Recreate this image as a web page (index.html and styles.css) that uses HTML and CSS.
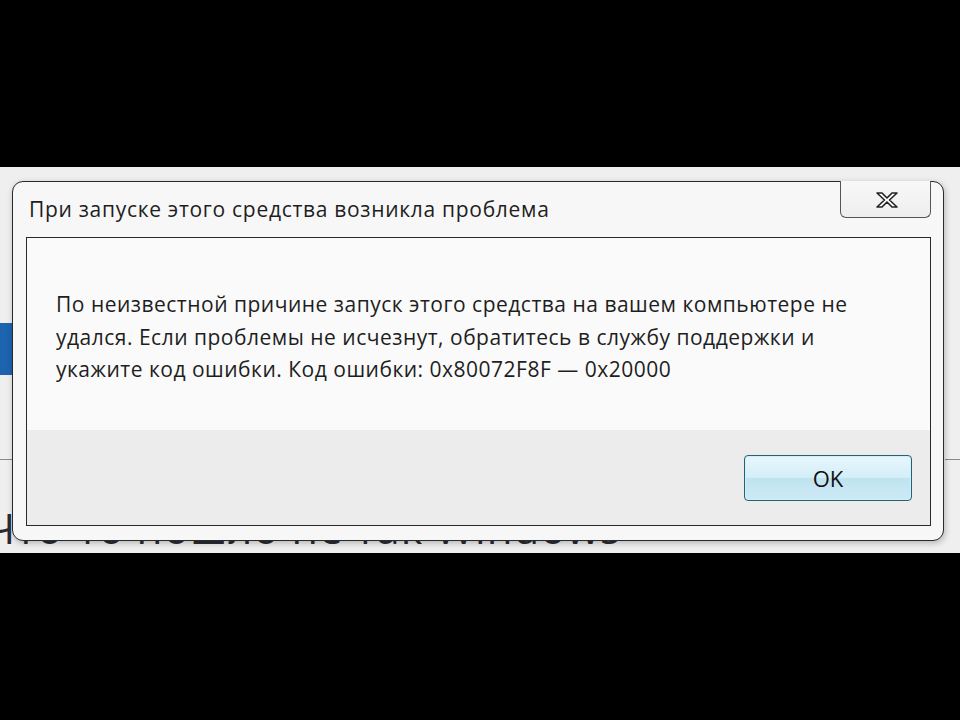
FILE: index.html
```html
<!DOCTYPE html>
<html lang="ru">
<head>
<meta charset="utf-8">
<link rel="stylesheet" href="styles.css">
</head>
<body>
<div class="top-black"></div>
<div class="screen">
  <div class="bg-blue"></div>
  <div class="bg-line bg-line-left"></div>
  <div class="bg-line bg-line-right"></div>
  <div class="bg-text">Что-то пошло не так Windows</div>
  <div class="dialog">
    <div class="titlebar">
      <div class="title">При запуске этого средства возникла проблема</div>
      <div class="close">
        <svg width="26" height="20" viewBox="0 0 26 20">
          <path d="M3 3 L8 3 L13 8 L18 3 L23 3 L15.5 10 L23 17 L18 17 L13 12 L8 17 L3 17 L10.5 10 Z" fill="#fff" stroke="#222" stroke-width="1.6" stroke-linejoin="round"/>
        </svg>
      </div>
    </div>
    <div class="client">
      <div class="content">
        <p class="message">По неизвестной причине запуск этого средства на вашем компьютере не<br>удался. Если проблемы не исчезнут, обратитесь в службу поддержки и<br>укажите код ошибки. Код ошибки: 0x80072F8F — 0x20000</p>
      </div>
      <div class="footer">
        <button class="ok">OK</button>
      </div>
    </div>
  </div>
</div>
<div class="bottom-black"></div>
</body>
</html>
```
FILE: styles.css
```css
html, body {
  margin: 0;
  padding: 0;
  background: #000;
  width: 960px;
  height: 720px;
  overflow: hidden;
  font-family: "Open Sans", "Noto Sans", sans-serif;
}
.top-black { height: 167px; }
.bottom-black { height: 167px; }
.screen {
  position: relative;
  height: 386px;
  background: #efefef;
  overflow: hidden;
}
.bg-blue {
  position: absolute;
  left: 0;
  top: 156px;
  width: 12px;
  height: 52px;
  background: #1c63b0;
}
.bg-line {
  position: absolute;
  top: 292px;
  height: 1px;
  background: #888;
}
.bg-line-left { left: 0; width: 12px; }
.bg-line-right { left: 945px; width: 15px; }
.bg-text {
  position: absolute;
  left: -14px;
  top: 340px;
  font-size: 42px;
  line-height: 1;
  color: #2a2a34;
  white-space: nowrap;
  letter-spacing: 1px;
}
.dialog {
  position: absolute;
  left: 12px;
  top: 14px;
  width: 932px;
  height: 360px;
  border: 1px solid #2a2a2a;
  border-radius: 11px;
  background: #f7f7f7;
  box-shadow: 1px 2px 6px rgba(0,0,0,0.25);
  padding: 0 12px 14px 13px;
  box-sizing: border-box;
  display: flex;
  flex-direction: column;
}
.titlebar {
  height: 55px;
  display: flex;
  justify-content: space-between;
  align-items: flex-start;
}
.title {
  margin-top: 13px;
  margin-left: 3px;
  font-size: 21px;
  color: #1e1e1e;
  letter-spacing: 0.7px;
}
.close {
  width: 91px;
  height: 37px;
  margin-top: -1px;
  border: 1px solid #555;
  border-top: none;
  border-radius: 0 0 6px 6px;
  background: linear-gradient(#f8f8f8, #eeeeee);
  box-sizing: border-box;
  display: flex;
  justify-content: center;
  align-items: center;
}
.close svg { margin-left: 3px; margin-top: 1px; }
.client {
  flex: 1;
  border: 1px solid #2a2a2a;
  display: flex;
  flex-direction: column;
  background: #fafafa;
}
.content {
  height: 192px;
  padding: 50px 0 0 29px;
  box-sizing: border-box;
}
.message {
  margin: 0;
  white-space: nowrap;
  font-size: 21px;
  line-height: 32.5px;
  color: #1e1e1e;
  letter-spacing: 0.5px;
}
.footer {
  flex: 1;
  background: #ececec;
  display: flex;
  justify-content: flex-end;
  align-items: flex-start;
  padding: 25px 18px 0 0;
}
.ok {
  width: 168px;
  height: 46px;
  border: 1.5px solid #2f5f6f;
  border-radius: 4px;
  background: linear-gradient(#e8f6fc, #d3eef8 50%, #bfe3f0 51%, #cdeaf5);
  box-shadow: inset 0 0 0 1px #c8f0ff;
  font-family: "Open Sans", "Noto Sans", sans-serif;
  font-size: 22px;
  color: #111;
  padding: 0;
}
```
